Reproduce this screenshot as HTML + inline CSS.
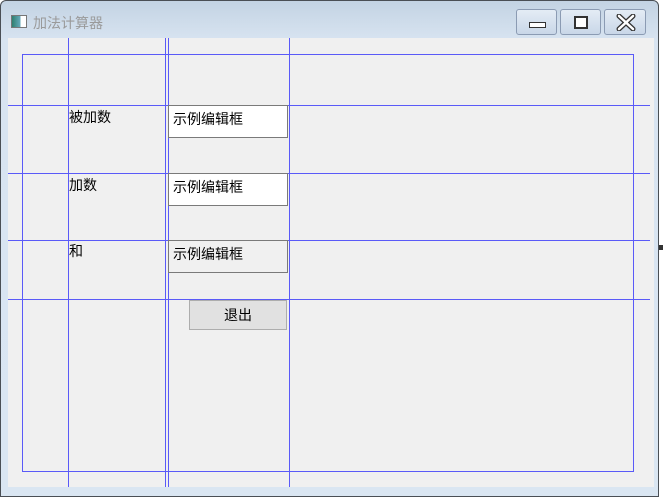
<!DOCTYPE html>
<html><head><meta charset="utf-8"><style>
body{margin:0;width:663px;height:497px;background:#fff;position:relative;overflow:hidden;font-family:"Liberation Sans","Noto Sans CJK SC",sans-serif;}
.a{position:absolute;}
.frame{left:0;top:0;width:659px;height:497px;background:linear-gradient(#c3d3e3,#d8e4f1 40px,#dae6f2);border:1px solid #4a4f55;border-radius:6px 6px 0 0;box-sizing:border-box;}
.client{left:8px;top:38px;width:646px;height:449px;background:#f0f0f0;}
.v{width:1px;top:38px;height:449px;background:#5a5af8;}
.h{height:1px;left:8px;width:642px;background:#5a5af8;}
.edit{background:#fff;border:1px solid #7a7a7a;box-sizing:border-box;width:121px;height:33px;font-size:14px;padding:3px 0 0 4px;}
.lbl{font-size:14px;color:#000;}
.tb{top:9px;height:26px;border:1px solid #8b9bb3;border-radius:3px;box-sizing:border-box;background:linear-gradient(#e4ecf5,#c9d7e8);}
</style></head><body>
<div class="a frame"></div>
<div class="a" style="left:11px;top:15px;width:14px;height:11px;border:1px solid #777;background:linear-gradient(90deg,#2f7f6f,#6ab 60%,#fff 60%);"></div>
<div class="a" style="left:33px;top:13px;font-size:14px;color:#9a9a9a;">加法计算器</div>
<div class="a tb" style="left:516px;width:41px;"><div class="a" style="left:12px;top:12px;width:15px;height:4px;border:1px solid #333;background:#fff;"></div></div>
<div class="a tb" style="left:560px;width:41px;"><div class="a" style="left:13px;top:6px;width:10px;height:9px;border:2px solid #333;background:#fff;"></div></div>
<div class="a tb" style="left:604px;width:42px;">
<svg class="a" style="left:11px;top:4px" width="20" height="17" viewBox="0 0 20 17"><path d="M3 2L17 15M17 2L3 15" stroke="#333" stroke-width="5" stroke-linecap="round"/><path d="M3 2L17 15M17 2L3 15" stroke="#fff" stroke-width="2.5" stroke-linecap="round"/></svg></div>
<div class="a client"></div>
<div class="a v" style="left:68px"></div>
<div class="a v" style="left:165px"></div>
<div class="a v" style="left:168px"></div>
<div class="a v" style="left:289px"></div>
<div class="a h" style="top:54px;left:22px;width:612px"></div>
<div class="a h" style="top:471px;left:22px;width:612px"></div>
<div class="a v" style="left:22px;top:54px;height:418px"></div>
<div class="a v" style="left:633px;top:54px;height:418px"></div>
<div class="a h" style="top:105px"></div>
<div class="a h" style="top:173px"></div>
<div class="a h" style="top:240px"></div>
<div class="a h" style="top:299px"></div>
<div class="a lbl" style="left:69px;top:107px">被加数</div>
<div class="a lbl" style="left:69px;top:175px">加数</div>
<div class="a lbl" style="left:69px;top:241px">和</div>
<div class="a edit" style="left:168px;top:105px;width:120px">示例编辑框</div>
<div class="a edit" style="left:168px;top:173px;width:120px">示例编辑框</div>
<div class="a edit" style="left:168px;top:240px;width:120px;background:#f0f0f0;">示例编辑框</div>
<div class="a" style="left:189px;top:300px;width:98px;height:30px;box-sizing:border-box;border:1px solid #adadad;background:#e1e1e1;font-size:14px;text-align:center;line-height:28px;">退出</div>
<div class="a" style="left:659px;top:245px;width:4px;height:5px;background:#333;"></div>
</body></html>
